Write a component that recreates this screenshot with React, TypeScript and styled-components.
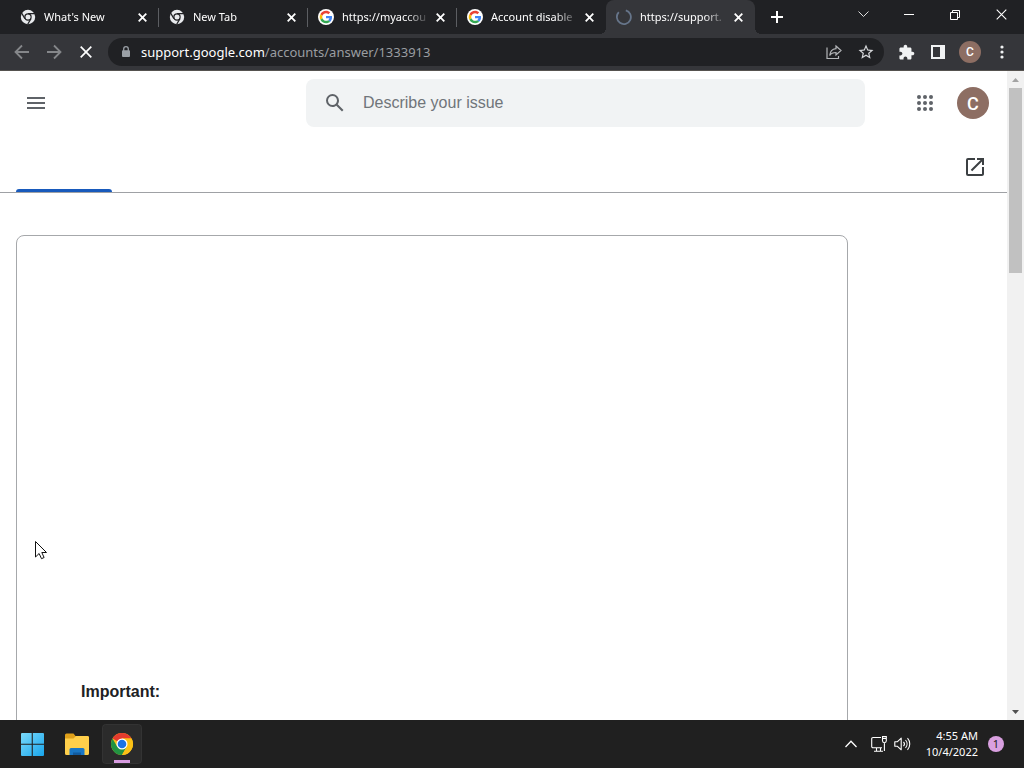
import React, { useId } from 'react';
import styled, { createGlobalStyle, css } from 'styled-components';

const GlobalStyle = createGlobalStyle`
  * { box-sizing: border-box; }
  body { margin: 0; background: #fff; overflow: hidden; }
  button, input { font: inherit; color: inherit; border: 0; padding: 0; margin: 0; background: none; outline: 0; }
  svg { display: block; flex: none; }
`;

const uiFont = '"Noto Sans", "Open Sans", sans-serif';
const pageFont = '"Liberation Sans", Arial, sans-serif';

const Desktop = styled.div`
  position: relative;
  height: 100vh;
  display: flex;
  flex-direction: column;
  font-family: ${uiFont};
`;

/* Browser chrome */

const TabStrip = styled.div`
  flex: none;
  height: 34px;
  display: flex;
  align-items: stretch;
  padding-left: 10px;
  background: #202124;
  color: #fff;
`;

const Tab = styled.div<{ $active?: boolean; $divider?: boolean }>`
  position: relative;
  width: 149px;
  display: flex;
  align-items: center;
  padding: 0 8px 0 10px;
  border-right: 1px solid transparent;
  font-size: 11px;
  line-height: 16px;
  ${({ $divider }) => $divider && css`
    background: linear-gradient(#5c5e62, #5c5e62) right 0 top 8px / 1px 19px no-repeat;
    background-origin: border-box;
  `}
  ${({ $active }) => $active && css`
    background: #35363a;
    border-radius: 8px 8px 0 0;
    &::before, &::after {
      content: '';
      position: absolute;
      bottom: 0;
      width: 6px;
      height: 6px;
    }
    &::before {
      right: 100%;
      background: radial-gradient(circle at 0 0, transparent 6px, #35363a 6px);
    }
    &::after {
      left: calc(100% + 1px);
      background: radial-gradient(circle at 100% 0, transparent 6px, #35363a 6px);
    }
  `}
`;

const TabTitle = styled.span`
  flex: 1;
  min-width: 0;
  margin-left: 8px;
  white-space: nowrap;
  mask-image: linear-gradient(to right, #000 64px, transparent 88px);
`;

const IconButton = styled.button<{ $w?: number; $h?: number }>`
  flex: none;
  display: flex;
  align-items: center;
  justify-content: center;
  width: ${({ $w = 16 }) => $w}px;
  height: ${({ $h = 16 }) => $h}px;
`;

const NewTabButton = styled(IconButton)`
  margin: 3px 0 0 8px;
`;

const WindowControls = styled.div`
  display: flex;
  margin-left: auto;
`;

const Toolbar = styled.div`
  flex: none;
  height: 37px;
  display: flex;
  align-items: center;
  padding: 0 6px;
  background: #35363a;
  border-bottom: 1px solid #55524f;
  color: #fff;
`;

const AddressBar = styled.div`
  flex: 1;
  min-width: 0;
  height: 28px;
  display: flex;
  align-items: center;
  margin: 0 6px;
  padding: 0 2px 0 11px;
  border-radius: 14px;
  background: #202124;
`;

const Url = styled.div`
  flex: 1;
  min-width: 0;
  margin-left: 8px;
  overflow: hidden;
  font-size: 13px;
  line-height: 20px;
  white-space: nowrap;
  color: #9a9da1;
`;

const Host = styled.span`
  color: #fff;
`;

const Avatar = styled.span<{ $size: number }>`
  display: flex;
  align-items: center;
  justify-content: center;
  width: ${({ $size }) => $size}px;
  height: ${({ $size }) => $size}px;
  border-radius: 50%;
  background: #8d6e63;
  color: #fff;
  font-family: Roboto, sans-serif;
  font-size: ${({ $size }) => ($size > 24 ? 18 : 12)}px;
  font-weight: 500;
`;

/* Support page */

const Viewport = styled.div`
  flex: 1;
  min-height: 0;
  display: flex;
  background: #fff;
`;

const Page = styled.main`
  flex: 1;
  min-width: 0;
  overflow: hidden;
  font-family: ${pageFont};
  color: #202124;
`;

const Header = styled.header`
  height: 64px;
  display: grid;
  grid-template-columns: 306px 1fr 142px;
  align-items: center;
`;

const MenuArea = styled.div`
  padding-left: 16px;
`;

const SearchBox = styled.label`
  height: 48px;
  display: flex;
  align-items: center;
  gap: 16px;
  padding: 0 17px;
  border-radius: 8px;
  background: #f1f3f4;
`;

const SearchInput = styled.input`
  flex: 1;
  min-width: 0;
  font-size: 16px;
  line-height: 24px;
  &::placeholder { color: #70757a; opacity: 1; }
`;

const AccountArea = styled.div`
  display: flex;
  align-items: center;
  justify-content: flex-end;
  gap: 16px;
  padding-right: 18px;
`;

const SectionBar = styled.nav`
  height: 58px;
  display: flex;
  align-items: flex-end;
  justify-content: space-between;
  padding: 0 20px 0 16px;
  border-bottom: 1px solid #9fa1a5;
`;

const SectionTab = styled.a`
  width: 96px;
  height: 48px;
  display: block;
  background: linear-gradient(#185abc, #185abc) bottom / 100% 3px no-repeat;
  clip-path: inset(45px 0 0 0 round 3px 3px 0 0);
`;

const OpenButton = styled(IconButton)`
  margin-bottom: 13px;
`;

const Article = styled.article`
  margin: 42px 159px 0 16px;
  padding: 64px;
  border: 1px solid #a6a8ab;
  border-radius: 8px;
`;

const MediaSpace = styled.div`
  height: 380px;
`;

const Note = styled.p`
  margin: 0;
  min-height: 160px;
  font-size: 16px;
  line-height: 24px;
  font-weight: 700;
`;

const Scrollbar = styled.div`
  flex: none;
  width: 17px;
  display: flex;
  flex-direction: column;
  align-items: center;
  background: #f1f1f1;
`;

const ScrollThumb = styled.div`
  width: 13px;
  height: 185px;
  margin-bottom: auto;
  background: #c1c1c1;
`;

const Pointer = styled.svg`
  position: absolute;
  left: 34px;
  top: 540px;
`;

/* Taskbar */

const Taskbar = styled.footer`
  flex: none;
  height: 48px;
  display: flex;
  align-items: center;
  padding: 0 20px 0 12px;
  background: #202020;
  color: #fff;
`;

const TaskButtons = styled.div`
  display: flex;
  gap: 5px;
`;

const TaskButton = styled.button<{ $active?: boolean }>`
  width: 40px;
  height: 40px;
  display: flex;
  align-items: center;
  justify-content: center;
  border-radius: 4px;
  ${({ $active }) => $active && css`
    background: linear-gradient(#d79be0, #d79be0) center bottom 1px / 16px 3px no-repeat, #2b2b2b;
    box-shadow: inset 0 0 0 1px #333;
  `}
`;

const Tray = styled.div`
  display: flex;
  align-items: center;
  margin-left: auto;
`;

const Clock = styled.time`
  margin: 0 10px 0 12px;
  font-size: 11px;
  line-height: 16px;
  text-align: right;
`;

const Badge = styled.span`
  width: 16px;
  height: 16px;
  display: flex;
  align-items: center;
  justify-content: center;
  border-radius: 50%;
  background: #d9a0e0;
  color: #202020;
  font-size: 11px;
  line-height: 16px;
`;

/* Drawings */

const MonoChrome = () => (
  <svg width="16" height="16" viewBox="0 0 16 16">
    <circle cx="8" cy="8" r="7.2" fill="#e8eaed" />
    <circle cx="8" cy="8" r="3.7" fill="#202124" />
    <circle cx="8" cy="8" r="2.5" fill="#e8eaed" />
    <path d="M8 4.6H15M4.9 9.6 1.5 3.9M11 9.6 7.7 15.3" stroke="#202124" strokeWidth="1.2" />
  </svg>
);

const GoogleG = () => (
  <svg width="16" height="16" viewBox="0 0 16 16">
    <circle cx="8" cy="8" r="8" fill="#fff" />
    <g transform="translate(1.7 1.7) scale(.2625)">
      <path fill="#EA4335" d="M24 9.5c3.54 0 6.71 1.22 9.21 3.6l6.85-6.85C35.9 2.38 30.47 0 24 0 14.62 0 6.51 5.38 2.56 13.22l7.98 6.19C12.43 13.72 17.74 9.5 24 9.5z" />
      <path fill="#4285F4" d="M46.98 24.55c0-1.57-.15-3.09-.38-4.55H24v9.02h12.94c-.58 2.96-2.26 5.48-4.78 7.18l7.73 6c4.51-4.18 7.09-10.36 7.09-17.65z" />
      <path fill="#FBBC05" d="M10.53 28.59c-.48-1.45-.76-2.99-.76-4.59s.27-3.14.76-4.59l-7.98-6.19C.92 16.46 0 20.12 0 24c0 3.88.92 7.54 2.56 10.78l7.97-6.19z" />
      <path fill="#34A853" d="M24 48c6.48 0 11.93-2.13 15.89-5.81l-7.73-6c-2.15 1.45-4.92 2.3-8.16 2.3-6.26 0-11.57-4.22-13.47-9.91l-7.98 6.19C6.51 42.62 14.62 48 24 48z" />
    </g>
  </svg>
);

const Spinner = () => (
  <svg width="16" height="16" viewBox="0 0 16 16" fill="none" strokeWidth="1.8">
    <path d="M2.8 3.2A7 7 0 1 0 9.8 1.3" stroke="#66758a" />
  </svg>
);

const Cross = ({ size = 9, width = 1.8 }: { size?: number; width?: number }) => (
  <svg width={size} height={size} viewBox={`0 0 ${size} ${size}`} stroke="#fff" strokeWidth={width}>
    <path d={`M.7.7 ${size - 0.7} ${size - 0.7}M${size - 0.7}.7.7 ${size - 0.7}`} />
  </svg>
);

const ArrowIcon = ({ forward }: { forward?: boolean }) => (
  <svg width="16" height="16" viewBox="0 0 16 16" fill="none" stroke="#85878a" strokeWidth="1.8">
    <path d={forward ? 'M1 8h13M8 1.5 14.5 8 8 14.5' : 'M15 8H2M8 1.5 1.5 8 8 14.5'} />
  </svg>
);

const ChromeLogo = () => (
  <svg width="24" height="24" viewBox="0 0 24 24">
    <circle cx="12" cy="12" r="11" fill="#fbc116" />
    <path d="M12 12 2.47 6.5A11 11 0 0 1 21.53 6.5H12z" fill="#e33b2e" />
    <path d="M2.47 6.5A11 11 0 0 0 12 23l4.76-8.25L12 12 7.24 14.75z" fill="#229342" />
    <path d="M12 6.5h9.53A11 11 0 0 1 12 23l4.76-8.25z" fill="#fbc116" />
    <circle cx="12" cy="12" r="5.5" fill="#fff" />
    <circle cx="12" cy="12" r="4.3" fill="#1a73e8" />
  </svg>
);

const WindowsLogo = () => {
  const id = useId();
  return (
    <svg width="24" height="24" viewBox="0 0 24 24">
      <linearGradient id={id} x1="0" y1="0" x2="24" y2="24" gradientUnits="userSpaceOnUse">
        <stop stopColor="#7fdcfb" />
        <stop offset="1" stopColor="#18a5ec" />
      </linearGradient>
      <path fill={`url(#${id})`} d="M2 1h9.7v10.7H1V2a1 1 0 0 1 1-1zM12.800 1H23a1 1 0 0 1 1 1v9.700H12.800zM1 12.800h10.700V24H2a1 1 0 0 1-1-1zM12.800 12.800H24V23a1 1 0 0 1-1 1H12.800z" />
    </svg>
  );
};

const FolderIcon = () => (
  <svg width="26" height="24" viewBox="0 0 26 24">
    <path d="M1 3A1.500 1.500 0 0 1 2.500 1.500h7L11.500 4h12A1.500 1.500 0 0 1 25 5.500V12H1z" fill="#dfa01a" />
    <path d="M1 6.500h8.500L12 4h11.500A1.500 1.500 0 0 1 25 5.500v16a1.500 1.500 0 0 1-1.500 1.500h-21A1.500 1.500 0 0 1 1 21.500z" fill="#ffcf4b" />
    <path d="M5.500 23v-5.500A1.500 1.500 0 0 1 7 16h12a1.500 1.500 0 0 1 1.500 1.500V23z" fill="#1976c5" />
    <path d="M9 23v-2.500h8V23z" fill="#115a9e" />
  </svg>
);

const tabs = [
  { title: "What's New", icon: <MonoChrome />, divider: true },
  { title: 'New Tab', icon: <MonoChrome />, divider: true },
  { title: 'https://myaccou', icon: <GoogleG />, divider: true },
  { title: 'Account disable', icon: <GoogleG /> },
  { title: 'https://support.', icon: <Spinner />, active: true },
];

export default function App() {
  return (
    <Desktop>
      <GlobalStyle />
      <TabStrip>
        {tabs.map((tab) => (
          <Tab key={tab.title} $active={tab.active} $divider={tab.divider}>
            {tab.icon}
            <TabTitle>{tab.title}</TabTitle>
            <IconButton aria-label="Close tab"><Cross /></IconButton>
          </Tab>
        ))}
        <NewTabButton $w={28} $h={28} aria-label="New tab">
          <svg width="12" height="12" viewBox="0 0 12 12" stroke="#fff" strokeWidth="2"><path d="M6 0v12M0 6h12" /></svg>
        </NewTabButton>
        <WindowControls>
          <IconButton $w={46} $h={29} aria-label="Search tabs">
            <svg width="11" height="7" viewBox="0 0 11 7" fill="none" stroke="#ddd"><path d="M.5.5l5 5 5-5" /></svg>
          </IconButton>
          <IconButton $w={46} $h={29} aria-label="Minimize">
            <svg width="10" height="1" viewBox="0 0 10 1"><path d="M0 0h10v1H0z" fill="#fff" /></svg>
          </IconButton>
          <IconButton $w={46} $h={29} aria-label="Restore">
            <svg width="10" height="10" viewBox="0 0 10 10" fill="none" stroke="#fff"><path d="M.5 2.500h7v7h-7zM2.500 2.500v-2h7v7h-2" /></svg>
          </IconButton>
          <IconButton $w={46} $h={29} aria-label="Close window"><Cross size={11} width={1.1} /></IconButton>
        </WindowControls>
      </TabStrip>

      <Toolbar>
        <IconButton $w={32} $h={28} aria-label="Back"><ArrowIcon /></IconButton>
        <IconButton $w={32} $h={28} aria-label="Forward"><ArrowIcon forward /></IconButton>
        <IconButton $w={32} $h={28} aria-label="Stop"><Cross size={12} width={1.7} /></IconButton>
        <AddressBar>
          <svg width="14" height="14" viewBox="0 0 14 14">
            <path d="M4.700 6V4a2.300 2.300 0 0 1 4.600 0v2" fill="none" stroke="#9aa0a6" strokeWidth="1.300" />
            <rect x="3" y="5.200" width="8" height="6.800" rx="1" fill="#9aa0a6" />
          </svg>
          <Url><Host>support.google.com</Host>/accounts/answer/1333913</Url>
          <IconButton $w={32} $h={28} aria-label="Share">
            <svg width="16" height="16" viewBox="0 0 16 16" fill="none" stroke="#b4b6b9" strokeWidth="1.200">
              <path d="M1 3.500v11h11.500V12M10 2l5 4.500-5 4.500V8.500c-3 0-5 .8-6.300 3C4 8 6.200 5 10 4.600z" />
            </svg>
          </IconButton>
          <IconButton $w={32} $h={28} aria-label="Bookmark">
            <svg width="18" height="18" viewBox="0 0 24 24" fill="#d5d7da">
              <path d="M22 9.240l-7.190-.62L12 2 9.190 8.630 2 9.240l5.460 4.730L5.820 21 12 17.270 18.180 21l-1.630-7.030L22 9.240zM12 15.400l-3.760 2.270 1-4.280-3.320-2.880 4.380-.38L12 6.100l1.710 4.040 4.380.38-3.320 2.880 1 4.280L12 15.400z" />
            </svg>
          </IconButton>
        </AddressBar>
        <IconButton $w={32} $h={28} aria-label="Extensions">
          <svg width="17" height="17" viewBox="0 0 24 24" fill="#f1f3f4">
            <path d="M20.500 11H19V7c0-1.100-.9-2-2-2h-4V3.500C13 2.120 11.880 1 10.500 1S8 2.120 8 3.500V5H4c-1.100 0-1.990.9-1.990 2v3.800H3.500c1.490 0 2.700 1.210 2.700 2.700s-1.210 2.700-2.700 2.700H2V20c0 1.100.9 2 2 2h3.800v-1.500c0-1.490 1.210-2.700 2.700-2.700s2.700 1.210 2.700 2.700V22H17c1.100 0 2-.9 2-2v-4h1.500c1.380 0 2.500-1.120 2.500-2.500S21.880 11 20.500 11z" />
          </svg>
        </IconButton>
        <IconButton $w={32} $h={28} aria-label="Side panel">
          <svg width="14" height="14" viewBox="0 0 14 14"><path fillRule="evenodd" fill="#f1f3f4" d="M0 0h14v14H0zM2 2v10h7V2z" /></svg>
        </IconButton>
        <IconButton $w={32} $h={28} aria-label="Profile"><Avatar $size={22}>C</Avatar></IconButton>
        <IconButton $w={32} $h={28} aria-label="Browser menu">
          <svg width="4" height="14" viewBox="0 0 4 14" fill="#f1f3f4"><circle cx="2" cy="2" r="1.600" /><circle cx="2" cy="7" r="1.600" /><circle cx="2" cy="12" r="1.600" /></svg>
        </IconButton>
      </Toolbar>

      <Viewport>
        <Page>
          <Header>
            <MenuArea>
              <IconButton $w={40} $h={40} aria-label="Main menu">
                <svg width="24" height="24" viewBox="0 0 24 24" fill="#5f6368"><path d="M3 18h18v-2H3v2zm0-5h18v-2H3v2zm0-7v2h18V6H3z" /></svg>
              </IconButton>
            </MenuArea>
            <SearchBox>
              <svg width="24" height="24" viewBox="0 0 24 24" fill="#5f6368">
                <path d="M20.490 19l-5.730-5.730C15.530 12.200 16 10.910 16 9.500A6.500 6.500 0 1 0 9.500 16c1.410 0 2.700-.47 3.770-1.240L19 20.490 20.490 19zM5 9.500C5 7.010 7.010 5 9.500 5S14 7.010 14 9.500 11.990 14 9.500 14 5 11.990 5 9.500z" />
              </svg>
              <SearchInput type="text" placeholder="Describe your issue" aria-label="Describe your issue" />
            </SearchBox>
            <AccountArea>
              <IconButton $w={32} $h={32} aria-label="Google apps">
                <svg width="24" height="24" viewBox="0 0 24 24" fill="#5f6368">
                  {[6, 12, 18].map((y) => [6, 12, 18].map((x) => <circle key={`${x}-${y}`} cx={x} cy={y} r="2" />))}
                </svg>
              </IconButton>
              <IconButton $w={32} $h={32} aria-label="Google Account"><Avatar $size={32}>C</Avatar></IconButton>
            </AccountArea>
          </Header>
          <SectionBar>
            <SectionTab href="#help" aria-label="Help" />
            <OpenButton $w={24} $h={24} aria-label="Open in new window">
              <svg width="24" height="24" viewBox="0 0 24 24" fill="#3c4043">
                <path d="M19 19H5V5h7V3H5a2 2 0 0 0-2 2v14a2 2 0 0 0 2 2h14c1.100 0 2-.9 2-2v-7h-2v7zM14 3v2h3.590l-9.830 9.830 1.410 1.410L19 6.410V10h2V3h-7z" />
              </svg>
            </OpenButton>
          </SectionBar>
          <Article>
            <MediaSpace />
            <Note>Important:</Note>
          </Article>
        </Page>
        <Scrollbar>
          <IconButton $w={17} $h={17} aria-label="Scroll up">
            <svg width="7" height="4" viewBox="0 0 7 4"><path d="M0 4 3.500 0 7 4z" fill="#a3a3a3" /></svg>
          </IconButton>
          <ScrollThumb />
          <IconButton $w={17} $h={17} aria-label="Scroll down">
            <svg width="7" height="4" viewBox="0 0 7 4"><path d="M0 0h7L3.500 4z" fill="#505050" /></svg>
          </IconButton>
        </Scrollbar>
      </Viewport>

      <Taskbar>
        <TaskButtons>
          <TaskButton aria-label="Start"><WindowsLogo /></TaskButton>
          <TaskButton aria-label="File Explorer"><FolderIcon /></TaskButton>
          <TaskButton $active aria-label="Google Chrome"><ChromeLogo /></TaskButton>
        </TaskButtons>
        <Tray>
          <IconButton $w={30} $h={40} aria-label="Hidden icons">
            <svg width="12" height="8" viewBox="0 0 12 8" fill="none" stroke="#fff" strokeWidth="1.300"><path d="M.5 7 6 1.300 11.500 7" /></svg>
          </IconButton>
          <IconButton $w={26} $h={40} aria-label="Network">
            <svg width="16" height="16" viewBox="0 0 16 16" fill="none" stroke="#fff" strokeWidth="1.100">
              <path d="M10 1.500H2a1.300 1.300 0 0 0-1.300 1.300v7.700A1.300 1.300 0 0 0 2 11.800h9M3 15.300h9M5.500 12v3M9.500 12v3M11.500.6h3.800v4.200a1.900 1.900 0 0 1-3.800 0zM13.400 6.500v8.500M11.500 2.500h3.800" />
            </svg>
          </IconButton>
          <IconButton $w={22} $h={40} aria-label="Volume">
            <svg width="17" height="14" viewBox="0 0 17 14" fill="none" stroke="#fff" strokeWidth="1.100" strokeLinejoin="round">
              <path d="M.8 4.700h2.700L7.200 1.200v11.600L3.500 9.300H.8zM9.500 4.800a3.300 3.300 0 0 1 0 4.400M11.500 3a6 6 0 0 1 0 8M13.500 1.200a8.600 8.600 0 0 1 0 11.600" />
            </svg>
          </IconButton>
          <Clock>4:55 AM<br />10/4/2022</Clock>
          <Badge>1</Badge>
        </Tray>
      </Taskbar>

      <Pointer width="14" height="20" viewBox="0 0 14 20">
        <path d="M1.500 1.500v15.500l3.600-3.500 2.400 5.200 2.600-1.200-2.300-5h4.700z" fill="#fff" stroke="#111" strokeWidth="1" />
      </Pointer>
    </Desktop>
  );
}
